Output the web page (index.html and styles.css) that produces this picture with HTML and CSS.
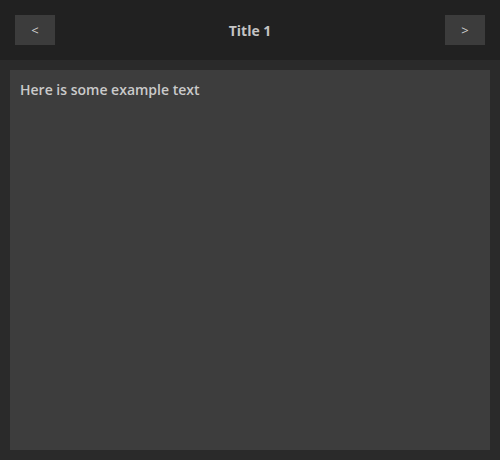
FILE: index.html
```html
<!DOCTYPE html>
<html>
<head>
<meta charset="utf-8">
<link rel="stylesheet" href="styles.css">
</head>
<body>
<div class="app">
  <header class="bar">
    <button class="nav">&lt;</button>
    <div class="title">Title 1</div>
    <button class="nav">&gt;</button>
  </header>
  <main class="wrap">
    <section class="panel">Here is some example text</section>
  </main>
</div>
</body>
</html>
```
FILE: styles.css
```css
html, body { margin: 0; padding: 0; }
body {
  width: 500px; height: 460px; background: #2a2a2a;
  font-family: "Open Sans", "Noto Sans", sans-serif;
  color: #cccccc;
}
.app { display: flex; flex-direction: column; height: 460px; }
.bar {
  height: 60px; background: #212121;
  display: flex; align-items: center; justify-content: space-between;
  padding: 0 15px; box-sizing: border-box;
}
.nav {
  width: 40px; height: 30px; border: 0; background: #3c3c3c;
  color: #d0d0d0; font-family: inherit; font-size: 13px; padding: 0;
}
.title { font-weight: bold; font-size: 14px; color: #c4c4c4; }
.wrap { flex: 1; padding: 10px; display: flex; }
.panel {
  flex: 1; background: #3d3d3d; padding: 10px;
  font-size: 14px; font-weight: 600; line-height: 20px; color: #cacaca;
}
```
